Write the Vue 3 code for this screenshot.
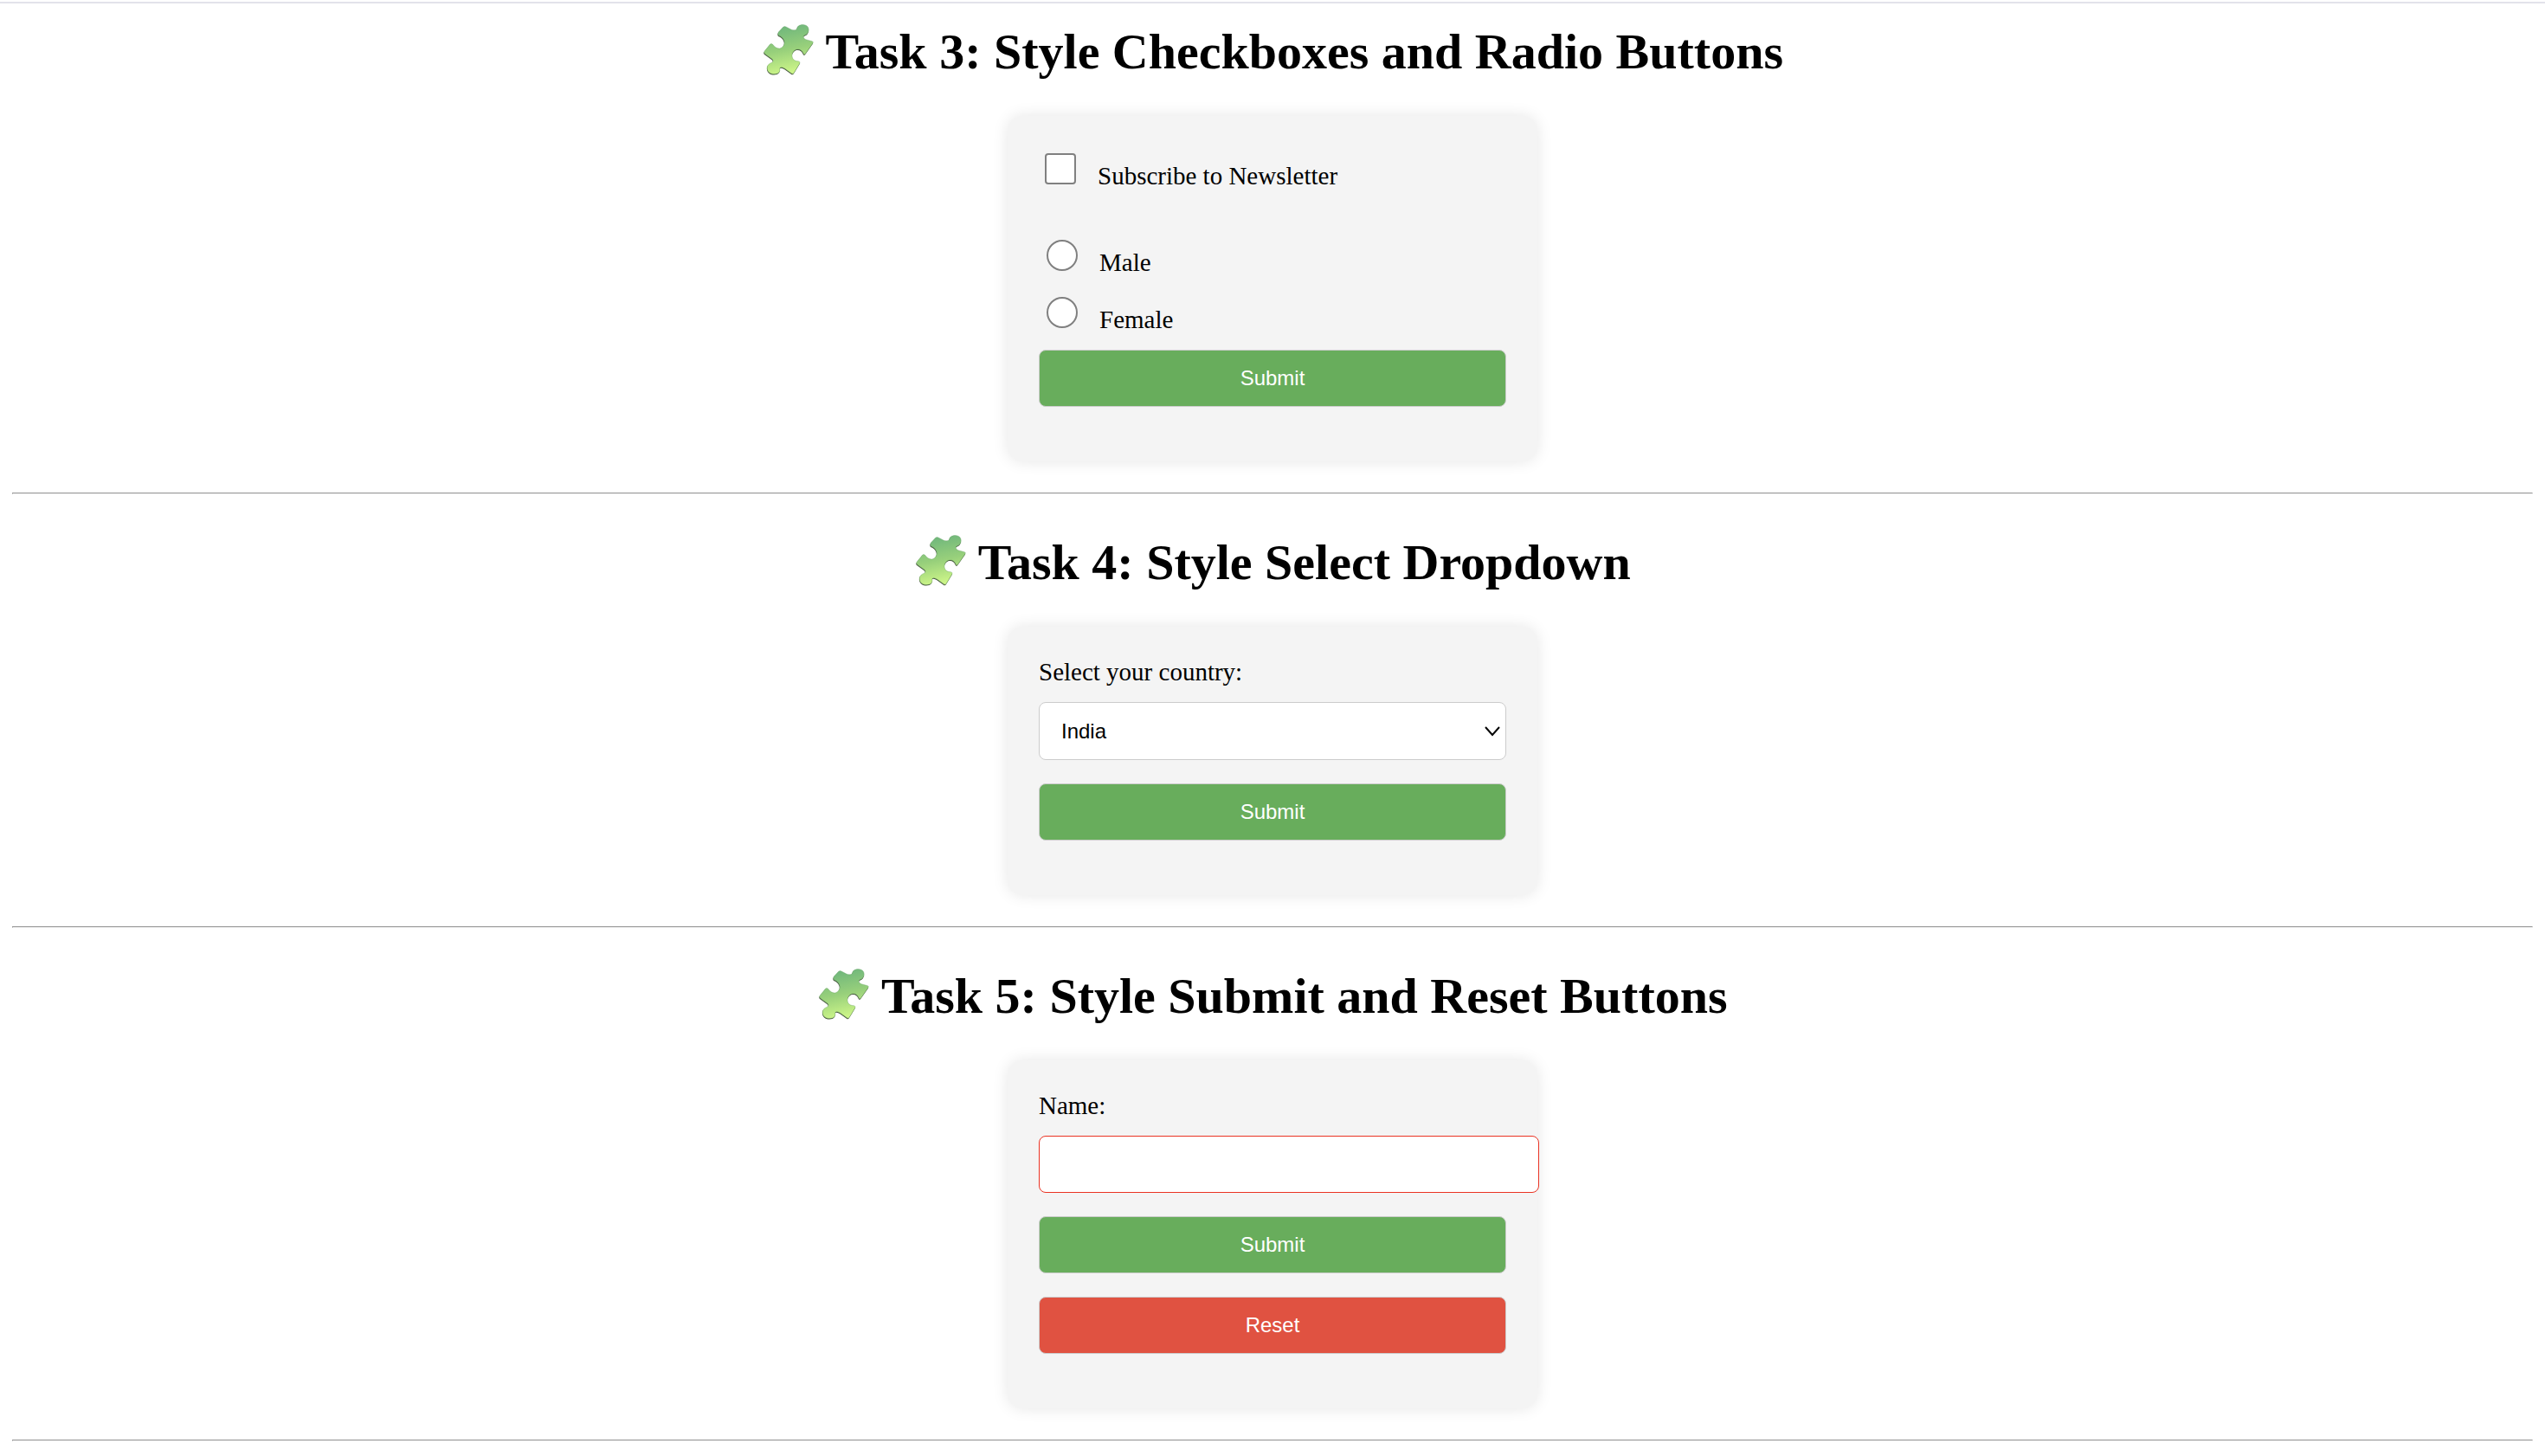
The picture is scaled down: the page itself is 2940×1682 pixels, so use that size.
<script setup>
import { ref } from 'vue'

const country = ref('India')
const name = ref('')
const subscribed = ref(false)
const gender = ref('')

const titles = [
  'Task 3: Style Checkboxes and Radio Buttons',
  'Task 4: Style Select Dropdown',
  'Task 5: Style Submit and Reset Buttons',
]
</script>

<template>
  <svg class="defs" aria-hidden="true">
    <defs>
      <linearGradient id="leaf" x1="0.4" y1="0" x2="0.6" y2="1">
        <stop offset="0" stop-color="#6db57c" />
        <stop offset="0.5" stop-color="#98d07b" />
        <stop offset="1" stop-color="#d2f98a" />
      </linearGradient>
      <path
        id="piece"
        d="M97 64 L113 47 Q118 43 123 46 L142 56 Q151 59 158 56 C163 53 160 47 166 43 C175 36 193 37 199 47 C205 58 200 70 191 74 C186 77 182 77 184 83 Q186 88 192 90 L214 96 Q219 99 216 103 L190 140 Q186 144 183 138 C179 127 169 121 158 125 C146 130 141 144 146 155 C149 162 157 165 166 165 Q173 167 171 172 L151 205 Q147 211 142 207 L119 191 Q110 184 103 187 C99 190 104 196 100 202 C95 211 76 212 66 205 C56 198 55 183 63 176 C69 170 76 171 78 165 Q79 160 74 157 L50 140 Q45 136 48 131 L68 106 Q72 102 77 107 C84 116 92 122 101 121 C113 118 121 105 116 93 C112 83 105 79 97 76 Q93 70 97 64 Z"
      />
    </defs>
  </svg>

  <div class="topline"></div>
  <main>
    <section>
      <h1><svg class="puzzle" viewBox="39 34 180 180" aria-hidden="true"><use href="#piece" class="under" /><use href="#piece" class="face" /></svg> {{ titles[0] }}</h1>
      <form class="card" @submit.prevent>
        <div class="choice first">
          <input id="news" v-model="subscribed" type="checkbox" />
          <label for="news">Subscribe to Newsletter</label>
        </div>
        <div class="choice">
          <input id="male" v-model="gender" type="radio" name="gender" value="male" />
          <label for="male">Male</label>
        </div>
        <div class="choice last">
          <input id="female" v-model="gender" type="radio" name="gender" value="female" />
          <label for="female">Female</label>
        </div>
        <button type="submit" class="control submit">Submit</button>
      </form>
    </section>
    <hr />

    <section>
      <h1><svg class="puzzle" viewBox="39 34 180 180" aria-hidden="true"><use href="#piece" class="under" /><use href="#piece" class="face" /></svg> {{ titles[1] }}</h1>
      <form class="card" @submit.prevent>
        <label class="caption" for="country">Select your country:</label>
        <div class="select-wrap">
          <select id="country" v-model="country" class="control">
            <option>India</option>
            <option>USA</option>
            <option>UK</option>
          </select>
          <svg class="chevron" viewBox="0 0 18 12" aria-hidden="true"><path d="M1 1 L9 10 L17 1" /></svg>
        </div>
        <button type="submit" class="control submit">Submit</button>
      </form>
    </section>
    <hr />

    <section>
      <h1><svg class="puzzle" viewBox="39 34 180 180" aria-hidden="true"><use href="#piece" class="under" /><use href="#piece" class="face" /></svg> {{ titles[2] }}</h1>
      <form class="card" @submit.prevent>
        <label class="caption" for="name">Name:</label>
        <input id="name" v-model="name" type="text" class="control name" required />
        <button type="submit" class="control submit">Submit</button>
        <button type="reset" class="control reset">Reset</button>
      </form>
    </section>
    <hr />
  </main>
</template>

<style>
body {
  margin: 0;
  background: #fff;
}
</style>

<style scoped>
.defs {
  position: absolute;
  width: 0;
  height: 0;
}
.topline {
  margin-top: 2px;
  height: 2px;
  background: #e2e2ea;
}
main {
  padding: 0 14px;
  font-family: "Liberation Serif", "Times New Roman", serif;
  font-size: 29px;
  line-height: 33px;
  color: #000;
}
section {
  padding: 44px 0 36px;
}
section:first-child {
  padding-top: 21px;
}
h1 {
  margin: 0 0 39px;
  font-size: 58px;
  line-height: 70px;
  font-weight: bold;
  text-align: center;
}
.puzzle {
  width: 60px;
  height: 60px;
  vertical-align: -8px;
}
.under {
  fill: #4a5540;
  transform: translate(-1px, 3px);
}
.face {
  fill: url(#leaf);
  stroke: #5f9a5c;
  stroke-width: 1;
}
hr {
  margin: 0;
  border: 1px solid;
  border-color: #999 #eee #eee #999;
}
.card {
  box-sizing: border-box;
  max-width: 612px;
  margin: 0 auto;
  padding: 36px;
  border-radius: 18px;
  background: #f4f4f4;
  box-shadow: 0 0 18px rgba(0, 0, 0, 0.1);
}
.caption {
  display: block;
  margin-bottom: 18px;
}
.choice {
  display: flex;
  align-items: baseline;
  gap: 25px;
  margin-bottom: 23px;
  padding-left: 9px;
}
.choice.first {
  margin-bottom: 57px;
  padding: 7px 0 0 7px;
}
.choice.last {
  margin-bottom: 18px;
}
.choice input {
  appearance: none;
  box-sizing: border-box;
  width: 36px;
  height: 36px;
  margin: 0;
  border: 2px solid #808080;
  border-radius: 50%;
  background: #fff;
}
.choice input[type="checkbox"] {
  border-radius: 4px;
}
.choice input:checked {
  background: #767676;
}
.control {
  display: block;
  box-sizing: border-box;
  width: 100%;
  margin: 0 0 27px;
  padding: 18px;
  border: 1px solid #ccc;
  border-radius: 8px;
  background: #fff;
  color: #000;
  font-family: "Liberation Sans", Arial, sans-serif;
  font-size: 24px;
  line-height: 28px;
}
.submit {
  background: #68ad5c;
  color: #fff;
}
.reset {
  background: #e05241;
  color: #fff;
}
.name {
  box-sizing: content-box;
  height: 28px;
  border-color: #ea3323;
}
.select-wrap {
  position: relative;
}
select.control {
  appearance: none;
  padding-left: 25px;
  line-height: 29px;
}
.chevron {
  position: absolute;
  top: 28px;
  right: 7px;
  width: 18px;
  height: 12px;
  fill: none;
  stroke: #000;
  stroke-width: 2;
  pointer-events: none;
}
</style>
